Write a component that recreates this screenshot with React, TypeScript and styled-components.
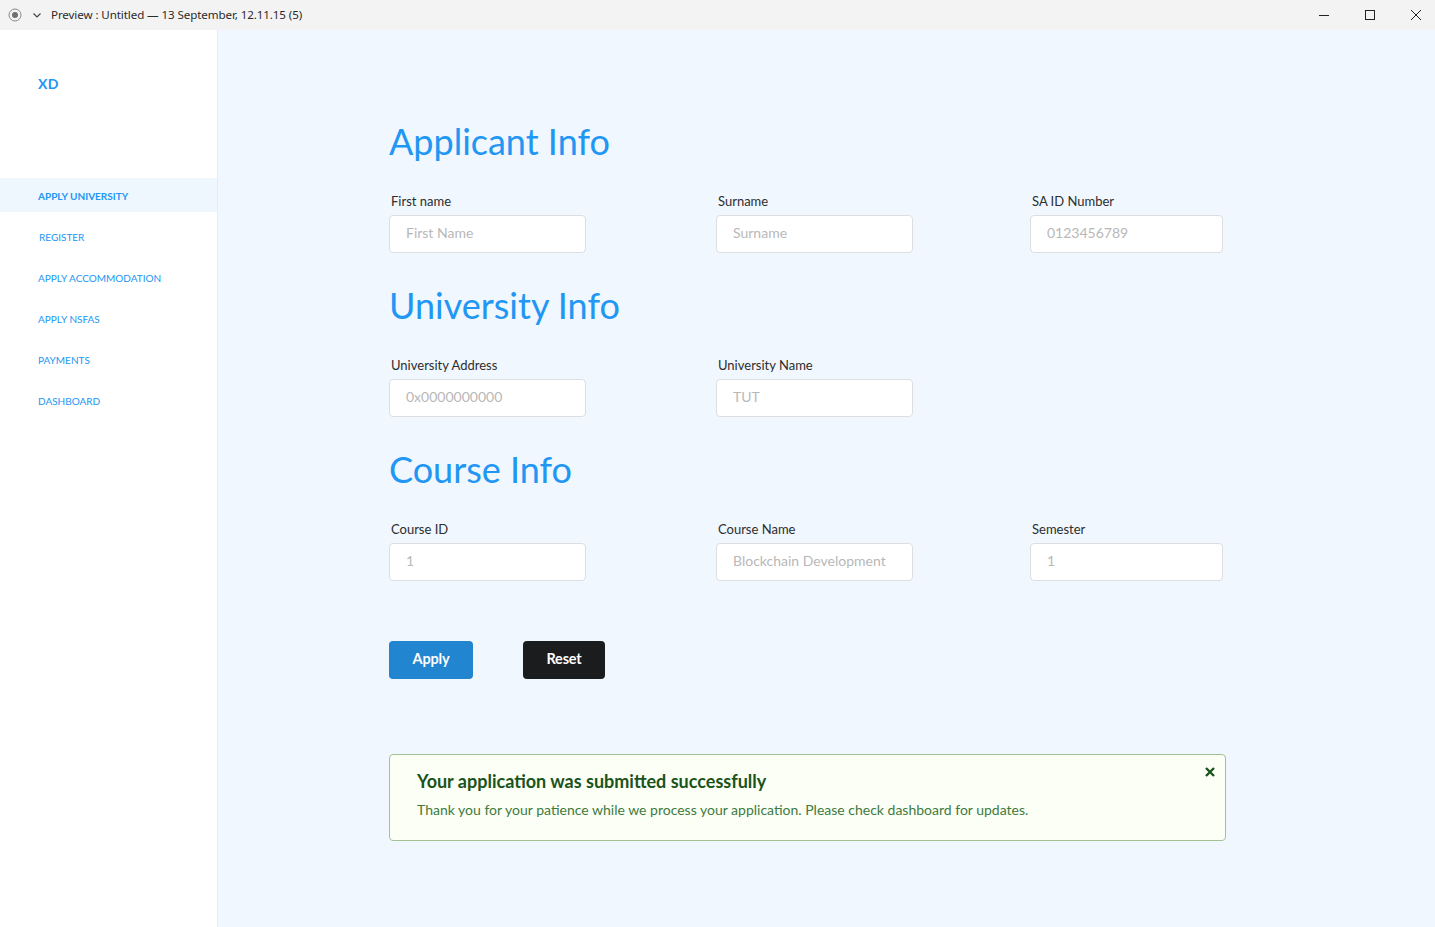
import React from "react";
import styled, { createGlobalStyle } from "styled-components";

const Global = createGlobalStyle`
  html, body { margin: 0; padding: 0; }
  body { font-family: Lato, "Noto Sans", sans-serif; background: #f0f7fe; }
  * { box-sizing: border-box; }
`;

const Window = styled.div`
  width: 1435px;
  height: 927px;
  display: flex;
  flex-direction: column;
  overflow: hidden;
`;

const TitleBar = styled.div`
  height: 30px;
  flex: 0 0 30px;
  background: #f3f3f3;
  display: flex;
  align-items: center;
  padding-left: 8px;
  font-family: "Noto Sans", "Open Sans", sans-serif;
  font-size: 11.6px;
  color: #2b2b2b;
`;

const TitleLeft = styled.div`
  display: flex;
  align-items: center;
  gap: 8px;
  flex: 1;
`;

const TitleText = styled.span`
  letter-spacing: -0.1px;
  margin-left: -1px;
  padding-bottom: 2px;
`;

const WinButtons = styled.div`
  display: flex;
  height: 100%;
`;

const WinButton = styled.div`
  width: 46px;
  height: 30px;
  padding-left: 8px;
  display: flex;
  align-items: center;
  justify-content: center;
`;

const Body = styled.div`
  flex: 1;
  display: flex;
  min-height: 0;
`;

const Sidebar = styled.nav`
  width: 218px;
  flex: 0 0 218px;
  background: #ffffff;
  border-right: 1px solid #e6ecf2;
  display: flex;
  flex-direction: column;
`;

const Logo = styled.div`
  height: 148px;
  padding: 45px 0 0 38px;
  font-family: Lato, sans-serif;
  font-weight: 700;
  font-size: 14px;
  color: #2196f3;
  letter-spacing: 0.3px;
`;

const Menu = styled.div`
  display: flex;
  flex-direction: column;
  gap: 7px;
`;

const MenuItem = styled.div<{ $active?: boolean; $indent?: number }>`
  height: 34px;
  display: flex;
  align-items: center;
  padding: 2px 0 0 ${(p) => 38 + (p.$indent || 0)}px;
  background: ${(p) => (p.$active ? "#eef6fe" : "transparent")};
  font-size: 10px;
  font-weight: ${(p) => (p.$active ? 700 : 400)};
  color: #2196f3;
  text-transform: uppercase;
  width: 217px;
`;

const Main = styled.main`
  flex: 1;
  background: #f0f7fe;
  padding: 89px 0 0 171px;
`;

const Section = styled.section`
  margin-bottom: 30px;
`;

const Heading = styled.h1`
  margin: 0 0 30px 0;
  font-family: Lato, sans-serif;
  font-weight: 400;
  font-size: 36px;
  line-height: 44px;
  color: #2196f3;
`;

const Row = styled.div`
  display: grid;
  grid-template-columns: 327px 314px 193px;
`;

const Field = styled.div<{ $w: number }>`
  width: ${(p) => p.$w}px;
`;

const Label = styled.label`
  display: block;
  font-size: 13px;
  line-height: 16px;
  color: #2d2d2d;
  margin: 0 0 6px 2px;
`;

const Input = styled.input`
  width: 100%;
  height: 38px;
  border: 1px solid #dcdee0;
  border-radius: 4px;
  background: #ffffff;
  padding: 0 16px 3px;
  font-family: Lato, sans-serif;
  font-size: 14px;
  color: #333;
  outline: none;
  &::placeholder { color: #b8b8b8; }
`;

const Buttons = styled.div`
  display: flex;
  gap: 50px;
  margin-top: 60px;
`;

const Button = styled.button<{ $dark?: boolean; $w: number }>`
  width: ${(p) => p.$w}px;
  height: 38px;
  padding: 0 0 3px;
  border: none;
  border-radius: 4px;
  background: ${(p) => (p.$dark ? "#1b1c1d" : "#2185d0")};
  color: #ffffff;
  font-family: Lato, sans-serif;
  font-weight: 700;
  font-size: 14.5px;
  letter-spacing: -0.2px;
  cursor: pointer;
`;

const Alert = styled.div`
  position: relative;
  margin-top: 75px;
  width: 837px;
  height: 87px;
  background: #fcfff5;
  border: 1px solid #a3c293;
  border-radius: 4px;
  padding: 14px 28px 0 27px;
`;

const AlertTitle = styled.div`
  font-weight: 700;
  font-size: 18px;
  line-height: 24px;
  color: #1a531b;
`;

const AlertText = styled.div`
  margin-top: 7px;
  font-size: 14px;
  line-height: 20px;
  color: #3f7a40;
`;

const Close = styled.div`
  position: absolute;
  top: 10px;
  right: 8px;
  width: 14px;
  height: 14px;
  display: flex;
  align-items: center;
  justify-content: center;
`;

type F = { label: string; placeholder: string; w: number };

const sections: { title: string; fields: F[] }[] = [
  {
    title: "Applicant Info",
    fields: [
      { label: "First name", placeholder: "First Name", w: 197 },
      { label: "Surname", placeholder: "Surname", w: 197 },
      { label: "SA ID Number", placeholder: "0123456789", w: 193 },
    ],
  },
  {
    title: "University Info",
    fields: [
      { label: "University Address", placeholder: "0x0000000000", w: 197 },
      { label: "University Name", placeholder: "TUT", w: 197 },
    ],
  },
  {
    title: "Course Info",
    fields: [
      { label: "Course ID", placeholder: "1", w: 197 },
      { label: "Course Name", placeholder: "Blockchain Development", w: 197 },
      { label: "Semester", placeholder: "1", w: 193 },
    ],
  },
];

const menu = [
  { t: "Apply University", active: true, indent: 0 },
  { t: "Register", indent: 1 },
  { t: "Apply Accommodation", indent: 0 },
  { t: "Apply NSFAS", indent: 0 },
  { t: "Payments", indent: 0 },
  { t: "Dashboard", indent: 0 },
];

export default function App() {
  return (
    <Window>
      <Global />
      <TitleBar>
        <TitleLeft>
          <svg width="14" height="14" viewBox="0 0 14 14">
            <circle cx="7" cy="7" r="6" fill="none" stroke="#8a8a8a" strokeWidth="1" />
            <circle cx="7" cy="7" r="3" fill="#6f6f6f" />
          </svg>
          <svg width="14" height="14" viewBox="0 0 14 14">
            <path d="M3.5 5.5 L7 9 L10.5 5.5" fill="none" stroke="#444" strokeWidth="1.2" />
          </svg>
          <TitleText>Preview : Untitled — 13 September, 12.11.15 (5)</TitleText>
        </TitleLeft>
        <WinButtons>
          <WinButton>
            <svg width="12" height="12" viewBox="0 0 12 12">
              <path d="M1 6.5 H11" stroke="#222" strokeWidth="1" />
            </svg>
          </WinButton>
          <WinButton>
            <svg width="12" height="12" viewBox="0 0 12 12">
              <rect x="1.5" y="1.5" width="9" height="9" fill="none" stroke="#222" strokeWidth="1" />
            </svg>
          </WinButton>
          <WinButton>
            <svg width="12" height="12" viewBox="0 0 12 12">
              <path d="M1 1 L11 11 M11 1 L1 11" stroke="#222" strokeWidth="1" />
            </svg>
          </WinButton>
        </WinButtons>
      </TitleBar>
      <Body>
        <Sidebar>
          <Logo>XD</Logo>
          <Menu>
            {menu.map((m) => (
              <MenuItem key={m.t} $active={m.active} $indent={m.indent}>
                {m.t}
              </MenuItem>
            ))}
          </Menu>
        </Sidebar>
        <Main>
          {sections.map((s) => (
            <Section key={s.title}>
              <Heading>{s.title}</Heading>
              <Row>
                {s.fields.map((f) => (
                  <Field key={f.label} $w={f.w}>
                    <Label>{f.label}</Label>
                    <Input placeholder={f.placeholder} />
                  </Field>
                ))}
              </Row>
            </Section>
          ))}
          <Buttons>
            <Button $w={84}>Apply</Button>
            <Button $w={82} $dark>Reset</Button>
          </Buttons>
          <Alert>
            <AlertTitle>Your application was submitted successfully</AlertTitle>
            <AlertText>
              Thank you for your patience while we process your application. Please check dashboard for updates.
            </AlertText>
            <Close>
              <svg width="12" height="12" viewBox="0 0 12 12">
                <path d="M2 2 L10 10 M10 2 L2 10" stroke="#1a531b" strokeWidth="2.4" />
              </svg>
            </Close>
          </Alert>
        </Main>
      </Body>
    </Window>
  );
}
